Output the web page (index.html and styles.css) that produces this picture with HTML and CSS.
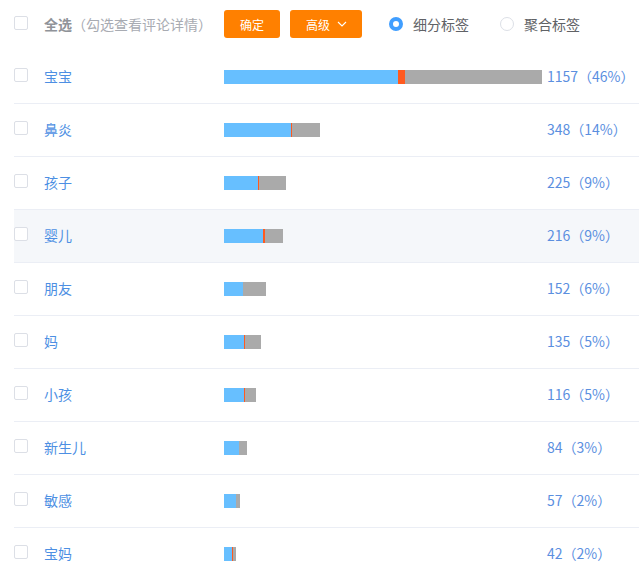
FILE: index.html
```html
<!DOCTYPE html>
<html lang="zh-CN">
<head>
<meta charset="utf-8">
<title>标签统计</title>
<link rel="stylesheet" href="styles.css">
</head>
<body>
<div class="panel">
  <div class="toolbar">
    <span class="checkbox"></span>
    <span class="select-all"><b>全选</b><span class="hint">（勾选查看评论详情）</span></span>
    <button class="btn">确定</button>
    <button class="btn btn-adv">高级<svg class="chev" viewBox="0 0 10 6" width="10" height="6"><path d="M1 1 L5 5 L9 1" fill="none" stroke="#fff" stroke-width="1.1"/></svg></button>
    <label class="radio checked"><span class="radio-dot"></span>细分标签</label>
    <label class="radio"><span class="radio-dot"></span>聚合标签</label>
  </div>

  <div class="row">
    <span class="checkbox"></span><span class="name">宝宝</span>
    <div class="bar"><span class="seg blue" style="width:174px"></span><span class="seg orange" style="width:7px"></span><span class="seg gray" style="width:137px"></span></div>
    <span class="count">1157（46%）</span>
  </div>
  <div class="row">
    <span class="checkbox"></span><span class="name">鼻炎</span>
    <div class="bar"><span class="seg blue" style="width:67px"></span><span class="seg orange" style="width:0.6px"></span><span class="seg gray" style="width:28px"></span></div>
    <span class="count">348（14%）</span>
  </div>
  <div class="row">
    <span class="checkbox"></span><span class="name">孩子</span>
    <div class="bar"><span class="seg blue" style="width:34px"></span><span class="seg orange" style="width:1.3px"></span><span class="seg gray" style="width:26.7px"></span></div>
    <span class="count">225（9%）</span>
  </div>
  <div class="row hover">
    <span class="checkbox"></span><span class="name">婴儿</span>
    <div class="bar"><span class="seg blue" style="width:38.7px"></span><span class="seg orange" style="width:2.6px"></span><span class="seg gray" style="width:18px"></span></div>
    <span class="count">216（9%）</span>
  </div>
  <div class="row">
    <span class="checkbox"></span><span class="name">朋友</span>
    <div class="bar"><span class="seg blue" style="width:19.3px"></span><span class="seg gray" style="width:22.4px"></span></div>
    <span class="count">152（6%）</span>
  </div>
  <div class="row">
    <span class="checkbox"></span><span class="name">妈</span>
    <div class="bar"><span class="seg blue" style="width:20px"></span><span class="seg orange" style="width:0.8px"></span><span class="seg gray" style="width:16.2px"></span></div>
    <span class="count">135（5%）</span>
  </div>
  <div class="row">
    <span class="checkbox"></span><span class="name">小孩</span>
    <div class="bar"><span class="seg blue" style="width:20px"></span><span class="seg orange" style="width:0.8px"></span><span class="seg gray" style="width:10.9px"></span></div>
    <span class="count">116（5%）</span>
  </div>
  <div class="row">
    <span class="checkbox"></span><span class="name">新生儿</span>
    <div class="bar"><span class="seg blue" style="width:15px"></span><span class="seg orange" style="width:0.4px"></span><span class="seg gray" style="width:7.6px"></span></div>
    <span class="count">84（3%）</span>
  </div>
  <div class="row">
    <span class="checkbox"></span><span class="name">敏感</span>
    <div class="bar"><span class="seg blue" style="width:12px"></span><span class="seg gray" style="width:4px"></span></div>
    <span class="count">57（2%）</span>
  </div>
  <div class="row">
    <span class="checkbox"></span><span class="name">宝妈</span>
    <div class="bar"><span class="seg blue" style="width:8px"></span><span class="seg orange" style="width:1px"></span><span class="seg gray" style="width:2.7px"></span></div>
    <span class="count">42（2%）</span>
  </div>
</div>
</body>
</html>
```

FILE: styles.css
```css
html, body {
  margin: 0;
  padding: 0;
  overflow: hidden;
  background: #fff;
}

body {
  font-family: "Noto Sans CJK SC", "Noto Sans", sans-serif;
  font-size: 14px;
  color: #606266;
}

.panel {
  padding-left: 14px;
}

.toolbar {
  height: 51px;
  box-sizing: border-box;
  padding-bottom: 3px;
  display: flex;
  align-items: center;
}

.checkbox {
  flex: none;
  width: 14px;
  height: 14px;
  box-sizing: border-box;
  border: 1px solid #dcdfe6;
  border-radius: 2px;
  background: #fff;
}

.toolbar .checkbox {
  margin-bottom: 2px;
}

.select-all {
  margin-left: 16px;
  width: 180px;
  color: #909399;
  font-size: 14px;
  line-height: 20px;
  margin-bottom: 1px;
}

.select-all b {
  font-weight: 700;
  color: #909399;
}

.hint {
  color: #a8abb2;
}

.btn {
  flex: none;
  height: 28px;
  border: 0;
  border-radius: 3px;
  background: #ff8000;
  color: #fff;
  font-family: inherit;
  font-size: 12px;
  padding: 0 16px;
  display: inline-flex;
  align-items: center;
  cursor: pointer;
}

.btn + .btn {
  margin-left: 10px;
}

.btn-adv {
  width: 72px;
  padding: 0 0 0 16px;
}

.chev {
  margin-left: 7px;
}

.radio {
  display: inline-flex;
  align-items: center;
  font-size: 14px;
  color: #606266;
  margin-left: 27px;
  margin-bottom: 1px;
}

.radio + .radio {
  margin-left: 31px;
}

.radio-dot {
  width: 14px;
  height: 14px;
  box-sizing: border-box;
  border-radius: 50%;
  border: 1px solid #dcdfe6;
  margin-right: 10px;
  background: #fff;
}

.radio.checked .radio-dot {
  border: 4px solid #409eff;
  background: #fff;
}

.row {
  height: 52px;
  border-bottom: 1px solid #ebeef5;
  display: flex;
  align-items: center;
}

.row .checkbox {
  margin-top: -4px;
}

.row.hover {
  background: #f5f7fa;
}

.name {
  margin-left: 16px;
  width: 180px;
  color: #4d8fe3;
  line-height: 20px;
  margin-bottom: 2px;
}

.bar {
  width: 323px;
  height: 14px;
  display: flex;
}

.seg {
  height: 14px;
  display: block;
}

.blue { background: #67bfff; }
.orange { background: #ff5a1f; }
.gray { background: #aaaaaa; }

.count {
  color: #5b8fdf;
  line-height: 20px;
  white-space: nowrap;
  margin-bottom: 2px;
}
```
